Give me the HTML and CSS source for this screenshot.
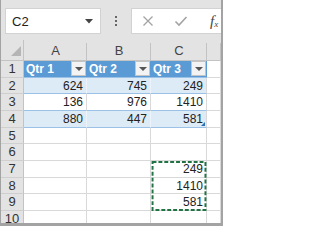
FILE: index.html
```html
<!DOCTYPE html>
<html>
<head>
<meta charset="utf-8">
<link rel="stylesheet" href="styles.css">
</head>
<body>
<div class="frame">
  <div class="app">
    <div class="toolbar">
      <div class="namebox">
        <span class="ref">C2</span>
        <svg class="caret" width="8" height="5" viewBox="0 0 8 5"><path d="M0 0H8L4 4.5Z" fill="#444"/></svg>
      </div>
      <div class="dots"><i></i><i></i><i></i></div>
      <div class="formula">
        <svg class="ico ico-x" width="12" height="12" viewBox="0 0 12 12"><path d="M1.5 1.5L10.5 10.5M10.5 1.5L1.5 10.5" stroke="#a3a3a3" stroke-width="1.3" fill="none"/></svg>
        <svg class="ico ico-ok" width="14" height="12" viewBox="0 0 14 12"><path d="M1.5 6.5L5 10L12.5 2" stroke="#a3a3a3" stroke-width="1.6" fill="none"/></svg>
        <span class="fx">f<sub>x</sub></span>
      </div>
    </div>
    <div class="sheet">
      <div class="corner"><svg width="10" height="10" viewBox="0 0 10 10"><path d="M10 0V10H0Z" fill="#b5b5b5"/></svg></div>
      <div class="colhdr">A</div>
      <div class="colhdr">B</div>
      <div class="colhdr">C</div>
      <div class="colhdr"></div>

      <div class="rowhdr">1</div>
      <div class="cell th">Qtr 1<span class="btn"><i></i></span></div>
      <div class="cell th">Qtr 2<span class="btn"><i></i></span></div>
      <div class="cell th">Qtr 3<span class="btn"><i></i></span></div>
      <div class="cell"></div>

      <div class="rowhdr">2</div>
      <div class="cell band num">624</div>
      <div class="cell band num">745</div>
      <div class="cell band num last">249</div>
      <div class="cell"></div>

      <div class="rowhdr">3</div>
      <div class="cell plain num">136</div>
      <div class="cell plain num">976</div>
      <div class="cell plain num">1410</div>
      <div class="cell"></div>

      <div class="rowhdr">4</div>
      <div class="cell band num">880</div>
      <div class="cell band num">447</div>
      <div class="cell band num last handle">581</div>
      <div class="cell"></div>

      <div class="rowhdr">5</div>
      <div class="cell"></div><div class="cell"></div><div class="cell"></div><div class="cell"></div>

      <div class="rowhdr">6</div>
      <div class="cell"></div><div class="cell"></div><div class="cell"></div><div class="cell"></div>

      <div class="rowhdr">7</div>
      <div class="cell"></div><div class="cell"></div>
      <div class="copy">
        <div class="cell num">249</div>
        <div class="cell num">1410</div>
        <div class="cell num">581</div>
        <svg class="marquee" width="56" height="51" viewBox="0 0 56 51"><rect x="1" y="1" width="54" height="49" fill="none" stroke="#217346" stroke-width="2" stroke-dasharray="4 2"/></svg>
      </div>
      <div class="cell"></div>

      <div class="rowhdr">8</div>
      <div class="cell"></div><div class="cell"></div><div class="cell"></div>

      <div class="rowhdr">9</div>
      <div class="cell"></div><div class="cell"></div><div class="cell"></div>

      <div class="rowhdr">10</div>
      <div class="cell"></div><div class="cell"></div><div class="cell"></div><div class="cell"></div>
    </div>
  </div>
</div>
</body>
</html>
```
FILE: styles.css
```css
html, body {
  margin: 0;
  padding: 0;
}
body {
  width: 223px;
  height: 226px;
  overflow: hidden;
  font-family: "Liberation Sans", Arial, sans-serif;
}
.frame {
  box-sizing: border-box;
  width: 223px;
  height: 226px;
  padding: 0 2px 3px 1px;
  background: #a3a3a3;
}
.app {
  width: 220px;
  height: 223px;
  overflow: hidden;
  background: #e3e3e3;
}
.toolbar {
  height: 40px;
  box-sizing: border-box;
  padding: 8px 0 0 4px;
  display: flex;
  align-items: flex-start;
}
.namebox {
  box-sizing: border-box;
  width: 96px;
  height: 26px;
  background: #fff;
  border: 1px solid #d2d2d2;
  display: flex;
  align-items: center;
  justify-content: space-between;
  padding: 0 7px 0 6px;
}
.ref {
  font-size: 13px;
  color: #222;
}
.caret {
  display: block;
}
.dots {
  width: 30px;
  height: 26px;
  display: flex;
  flex-direction: column;
  align-items: center;
  justify-content: center;
  gap: 2px;
}
.dots i {
  display: block;
  width: 2px;
  height: 2px;
  background: #666;
}
.formula {
  flex: 1;
  box-sizing: border-box;
  height: 26px;
  background: #fff;
  border: 1px solid #d2d2d2;
  border-right: none;
  display: flex;
  align-items: center;
  overflow: hidden;
  white-space: nowrap;
}
.ico {
  display: block;
  flex: none;
}
.ico-x {
  margin-left: 10px;
}
.ico-ok {
  margin-left: 20px;
}
.fx {
  margin-left: 22px;
  font-family: "Liberation Serif", serif;
  font-style: italic;
  font-size: 15px;
  color: #444;
}
.fx sub {
  font-size: 9px;
  vertical-align: -1px;
}
.sheet {
  display: grid;
  grid-template-columns: 23px 63px 64px 56px 14px;
  grid-template-rows: 21px repeat(10, 16.667px);
  background: #fff;
}
.corner {
  background: #e3e3e3;
  border-right: 1px solid #c3c3c3;
  border-bottom: 1px solid #c3c3c3;
  box-sizing: border-box;
  display: flex;
  align-items: flex-end;
  justify-content: flex-end;
  padding: 0 2px 4px 0;
}
.corner svg {
  display: block;
}
.colhdr {
  background: #e3e3e3;
  box-sizing: border-box;
  border-bottom: 1px solid #c3c3c3;
  font-size: 13px;
  color: #444;
  text-align: center;
  line-height: 18px;
  padding-top: 2px;
  position: relative;
}
.colhdr::after {
  content: "";
  position: absolute;
  right: 0;
  top: 3px;
  bottom: 0;
  width: 1px;
  background: #c3c3c3;
}
.rowhdr {
  background: #e3e3e3;
  box-sizing: border-box;
  border-right: 1px solid #c3c3c3;
  border-bottom: 1px solid #cfcfcf;
  font-size: 13px;
  color: #333;
  text-align: center;
  line-height: 16px;
}
.cell {
  box-sizing: border-box;
  border-right: 1px solid #d9d9d9;
  border-bottom: 1px solid #d9d9d9;
  font-size: 12px;
  color: #222;
  line-height: 16px;
  height: 16.667px;
  padding: 0 3px;
  white-space: nowrap;
  overflow: hidden;
  position: relative;
}
.num {
  text-align: right;
}
.th {
  background: #5b9bd5;
  color: #fff;
  font-weight: bold;
  padding-left: 2px;
  border-right: none;
  border-bottom: 1px solid #9bc2e6;
  display: flex;
  align-items: center;
  justify-content: space-between;
  padding-right: 1px;
}
.btn {
  box-sizing: border-box;
  width: 15px;
  height: 15px;
  background: #f3f3f3;
  border: 1px solid #c4c4c4;
  display: flex;
  align-items: center;
  justify-content: center;
}
.btn i {
  display: block;
  width: 0;
  height: 0;
  border-left: 4px solid transparent;
  border-right: 4px solid transparent;
  border-top: 4px solid #555;
  margin-top: 1px;
}
.band {
  background: #ddebf7;
  border-right: 1px solid #edf3fa;
  border-bottom: 1px solid #9bc2e6;
}
.band.last {
  border-right-color: #d9d9d9;
}
.plain {
  border-bottom: 1px solid #9bc2e6;
}
.handle::after {
  content: "";
  position: absolute;
  right: 1px;
  bottom: 1px;
  width: 0;
  height: 0;
  border-left: 4px solid transparent;
  border-bottom: 4px solid #2f6fb5;
}
.copy {
  grid-row: span 3;
  position: relative;
  display: flex;
  flex-direction: column;
}
.copy .cell {
  flex: 1;
  height: auto;
}
.marquee {
  position: absolute;
  left: 0;
  top: 0;
  width: 100%;
  height: 100%;
  display: block;
}
```
